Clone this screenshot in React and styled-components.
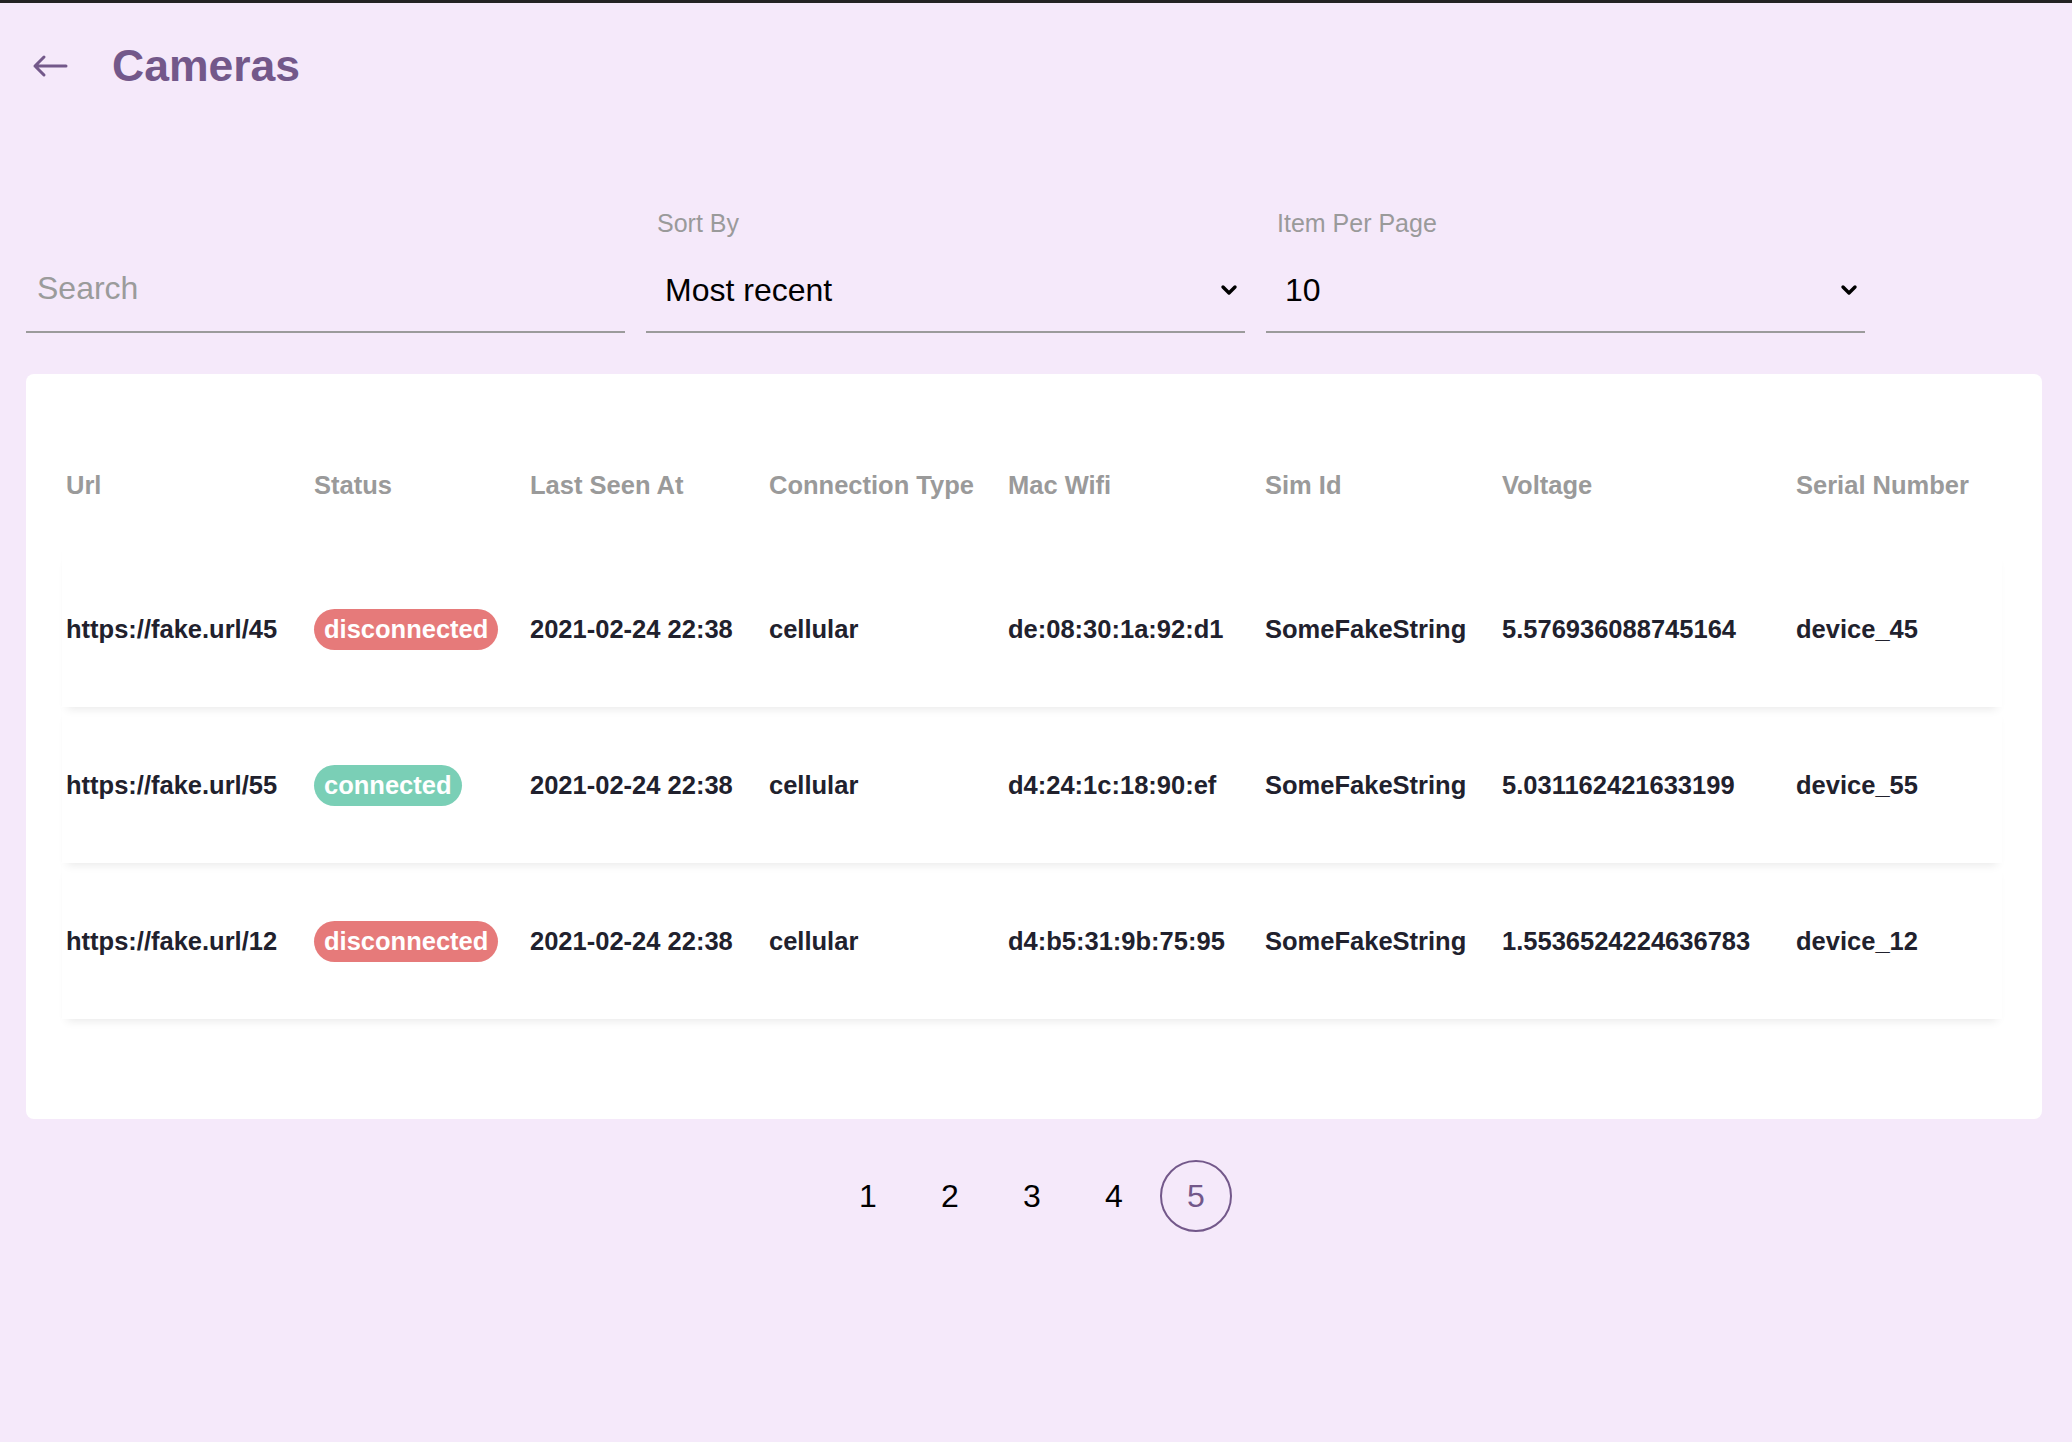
import React from "react";
import styled, { createGlobalStyle } from "styled-components";

const GlobalStyle = createGlobalStyle`
  html, body {
    margin: 0;
    padding: 0;
    background: #f5e9fa;
  }
  body {
    border-top: 3px solid #232323;
    font-family: "Liberation Sans", Arial, sans-serif;
    color: #000;
  }
`;

const Page = styled.div`
  padding: 0 30px 0 26px;
  min-height: 1439px;
  box-sizing: border-box;
`;

const Header = styled.header`
  height: 126px;
  display: flex;
  align-items: center;
  gap: 44px;
  padding-left: 6px;
`;

const BackButton = styled.button`
  border: 0;
  background: transparent;
  padding: 0;
  display: flex;
  align-items: center;
  cursor: pointer;
`;

const Title = styled.h1`
  margin: 0;
  font-size: 44.5px;
  line-height: 1;
  font-weight: 700;
  color: #73588a;
`;

const Filters = styled.div`
  display: flex;
  align-items: flex-end;
  gap: 21px;
  padding-top: 80px;
`;

const Field = styled.div`
  width: 599px;
  display: flex;
  flex-direction: column;
`;

const Label = styled.label`
  font-size: 25px;
  line-height: 28px;
  color: #9a9a9a;
  padding-left: 11px;
`;

const Control = styled.div`
  height: ${(p) => (p.$select ? "82px" : "86px")};
  padding-top: ${(p) => (p.$select ? "12px" : "8px")};
  border-bottom: 2px solid #9b9b9b;
  display: flex;
  align-items: center;
  padding-left: ${(p) => (p.$select ? "19px" : "11px")};
  padding-right: 7px;
  font-size: 32px;
  color: ${(p) => (p.$muted ? "#9b9b9b" : "#000")};
`;

const ControlText = styled.span`
  flex: 1;
`;

const Card = styled.section`
  margin-top: 41px;
  background: #fff;
  border-radius: 8px;
  padding: 46px 40px 100px 36px;
  font-weight: 700;
  font-size: 25.5px;
`;

const Row = styled.div`
  display: grid;
  grid-template-columns: 248px 216px 239px 239px 257px 237px 294px 1fr;
  align-items: center;
  padding-left: 4px;
  height: ${(p) => (p.$head ? "131px" : "156px")};
  color: ${(p) => (p.$head ? "#9a9a9a" : "#21212d")};
  box-shadow: ${(p) =>
    p.$head
      ? "none"
      : "0 7px 9px -5px rgba(0, 0, 0, 0.09), -1px 0 1px -1px rgba(0, 0, 0, 0.04)"};
  white-space: nowrap;
`;

const Cell = styled.div``;

const Badge = styled.span`
  display: inline-block;
  height: 41px;
  line-height: 41px;
  padding: 0 10px;
  border-radius: 21px;
  color: #fff;
  background: ${(p) => (p.$ok ? "#7acfb6" : "#e67a7a")};
`;

const Pagination = styled.nav`
  margin-top: 41px;
  display: flex;
  justify-content: center;
  gap: 10px;
  padding-right: 4px;
`;

const PageItem = styled.div`
  width: 72px;
  height: 72px;
  box-sizing: border-box;
  border-radius: 50%;
  display: flex;
  align-items: center;
  justify-content: center;
  font-size: 32px;
  color: ${(p) => (p.$active ? "#73588a" : "#000")};
  border: 2px solid ${(p) => (p.$active ? "#73588a" : "transparent")};
`;

const Chevron = () => (
  <svg width="18" height="12" viewBox="0 0 18 12">
    <polyline
      points="3,3 9,9 15,3"
      fill="none"
      stroke="#000"
      strokeWidth="3.4"
      strokeLinecap="round"
      strokeLinejoin="round"
    />
  </svg>
);

const BackArrow = () => (
  <svg width="36" height="24" viewBox="0 0 36 24">
    <path
      d="M34 12 H3 M12 3 L3 12 L12 21"
      fill="none"
      stroke="#73588a"
      strokeWidth="3"
      strokeLinecap="round"
      strokeLinejoin="round"
    />
  </svg>
);

const columns = [
  "Url",
  "Status",
  "Last Seen At",
  "Connection Type",
  "Mac Wifi",
  "Sim Id",
  "Voltage",
  "Serial Number",
];

const cameras = [
  {
    url: "https://fake.url/45",
    connected: false,
    mac: "de:08:30:1a:92:d1",
    voltage: "5.576936088745164",
    serial: "device_45",
  },
  {
    url: "https://fake.url/55",
    connected: true,
    mac: "d4:24:1c:18:90:ef",
    voltage: "5.031162421633199",
    serial: "device_55",
  },
  {
    url: "https://fake.url/12",
    connected: false,
    mac: "d4:b5:31:9b:75:95",
    voltage: "1.5536524224636783",
    serial: "device_12",
  },
];

export default function App() {
  return (
    <>
      <GlobalStyle />
      <Page>
        <Header>
          <BackButton aria-label="Back">
            <BackArrow />
          </BackButton>
          <Title>Cameras</Title>
        </Header>

        <Filters>
          <Field>
            <Control $muted>
              <ControlText>Search</ControlText>
            </Control>
          </Field>
          <Field>
            <Label>Sort By</Label>
            <Control $select>
              <ControlText>Most recent</ControlText>
              <Chevron />
            </Control>
          </Field>
          <Field>
            <Label>Item Per Page</Label>
            <Control $select>
              <ControlText>10</ControlText>
              <Chevron />
            </Control>
          </Field>
        </Filters>

        <Card>
          <Row $head>
            {columns.map((c) => (
              <Cell key={c}>{c}</Cell>
            ))}
          </Row>
          {cameras.map((cam) => (
            <Row key={cam.url}>
              <Cell>{cam.url}</Cell>
              <Cell>
                <Badge $ok={cam.connected}>
                  {cam.connected ? "connected" : "disconnected"}
                </Badge>
              </Cell>
              <Cell>2021-02-24 22:38</Cell>
              <Cell>cellular</Cell>
              <Cell>{cam.mac}</Cell>
              <Cell>SomeFakeString</Cell>
              <Cell>{cam.voltage}</Cell>
              <Cell>{cam.serial}</Cell>
            </Row>
          ))}
        </Card>

        <Pagination>
          {[1, 2, 3, 4, 5].map((n) => (
            <PageItem key={n} $active={n === 5}>
              {n}
            </PageItem>
          ))}
        </Pagination>
      </Page>
    </>
  );
}
